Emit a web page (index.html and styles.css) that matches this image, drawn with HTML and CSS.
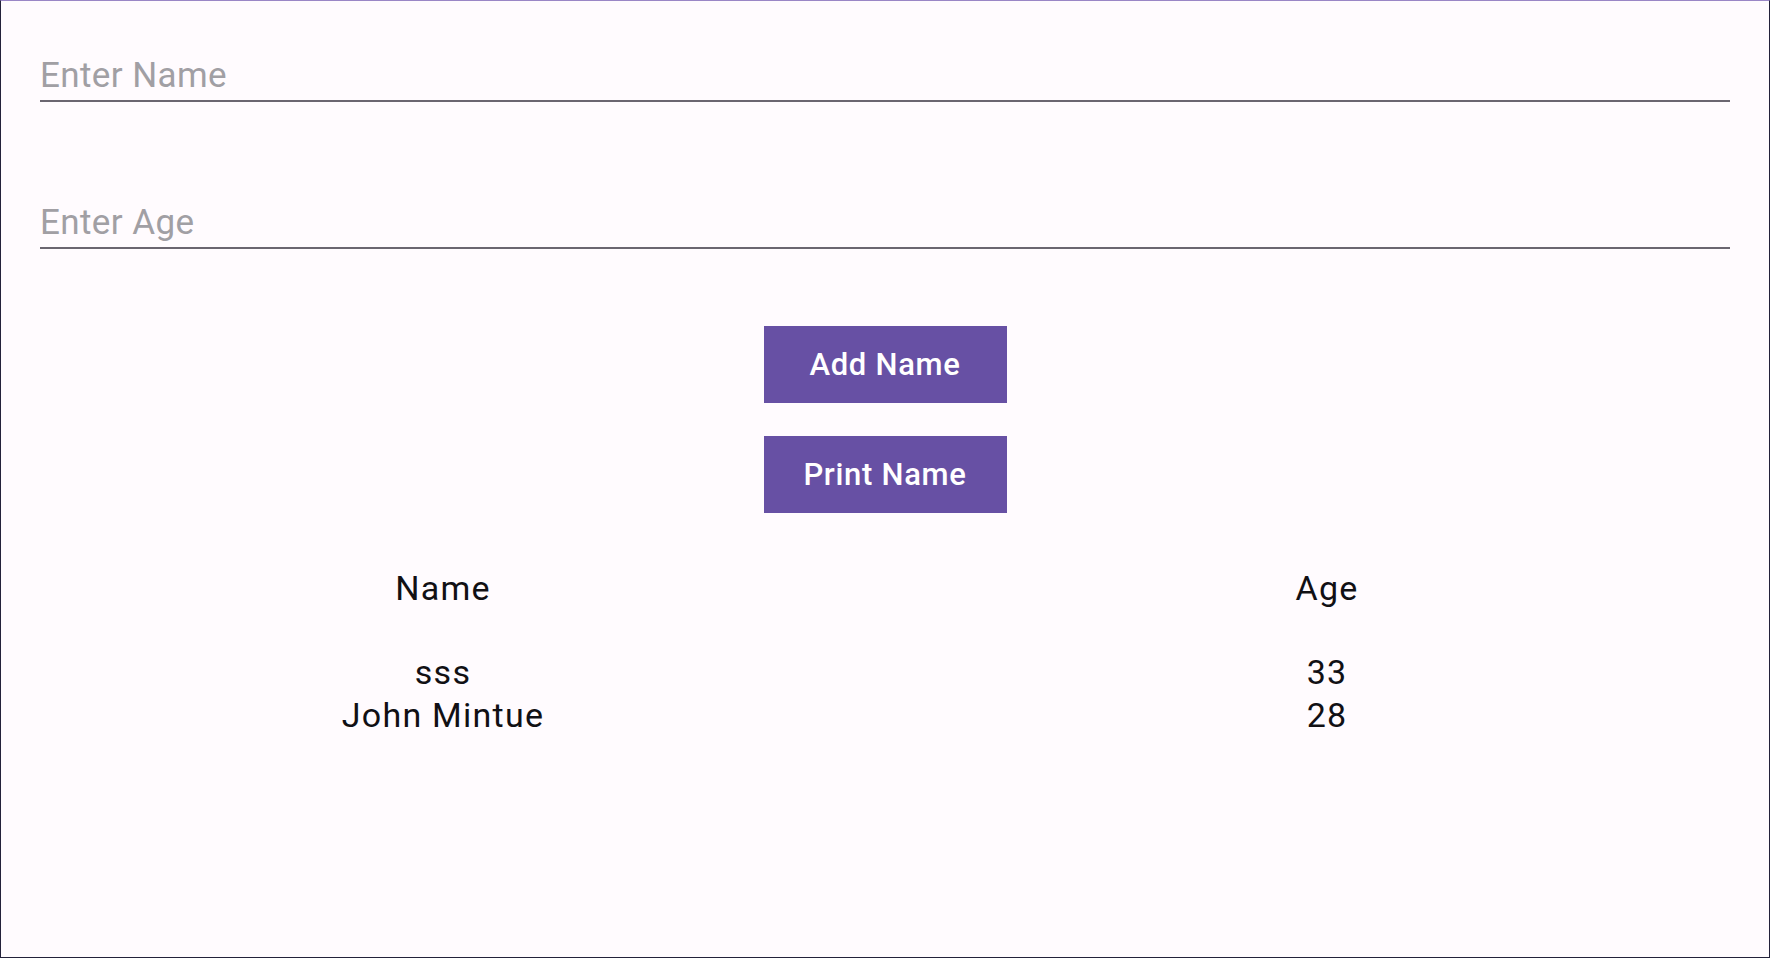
FILE: index.html
```html
<!DOCTYPE html>
<html>
<head>
<meta charset="utf-8">
<link rel="stylesheet" href="styles.css">
</head>
<body>
<div class="screen">
  <div class="field field-first"><span class="placeholder">Enter Name</span></div>
  <div class="field field-second"><span class="placeholder">Enter Age</span></div>
  <div class="actions">
    <button class="btn">Add Name</button>
    <button class="btn">Print Name</button>
  </div>
  <div class="table">
    <div class="col">
      <div class="head">Name</div>
      <div class="rows">
        <div class="cell">sss</div>
        <div class="cell">John Mintue</div>
      </div>
    </div>
    <div class="col">
      <div class="head">Age</div>
      <div class="rows">
        <div class="cell">33</div>
        <div class="cell">28</div>
      </div>
    </div>
  </div>
</div>
</body>
</html>
```
FILE: styles.css
```css
html, body {
  margin: 0;
  padding: 0;
}
body {
  background: #fffbfe;
  font-family: Roboto, "Noto Sans", sans-serif;
}
.screen {
  width: 1770px;
  height: 958px;
  box-sizing: border-box;
  border-top: 1px solid #9a86c6;
  border-left: 1px solid #23213a;
  border-right: 1px solid #23213a;
  border-bottom: 1px solid #23213a;
  background: #fffbfe;
  padding: 0 39px 0 39px;
  display: flex;
  flex-direction: column;
}
.field {
  border-bottom: 2px solid #6b6670;
  padding-bottom: 4px;
  font-size: 35px;
  line-height: 41px;
  letter-spacing: 0.4px;
  color: #a19fa4;
}
.field-first {
  margin-top: 54px;
}
.field-second {
  margin-top: 100px;
}
.placeholder {
  display: block;
}
.actions {
  margin-top: 77px;
  display: flex;
  flex-direction: column;
  align-items: center;
  gap: 33px;
}
.btn {
  width: 243px;
  height: 77px;
  border: none;
  border-radius: 0;
  background: #6750a4;
  color: #ffffff;
  font-family: Roboto, "Noto Sans", sans-serif;
  font-size: 31px;
  font-weight: 500;
  letter-spacing: 0.7px;
  padding: 0;
}
.table {
  margin: 54px -39px 0 -39px;
  display: grid;
  grid-template-columns: 1fr 1fr;
  color: #111014;
  font-size: 34px;
  letter-spacing: 1.25px;
}
.col {
  display: flex;
  flex-direction: column;
  align-items: center;
}
.head {
  line-height: 42px;
}
.rows {
  margin-top: 42px;
  display: flex;
  flex-direction: column;
  align-items: center;
}
.cell {
  line-height: 43px;
}
```
